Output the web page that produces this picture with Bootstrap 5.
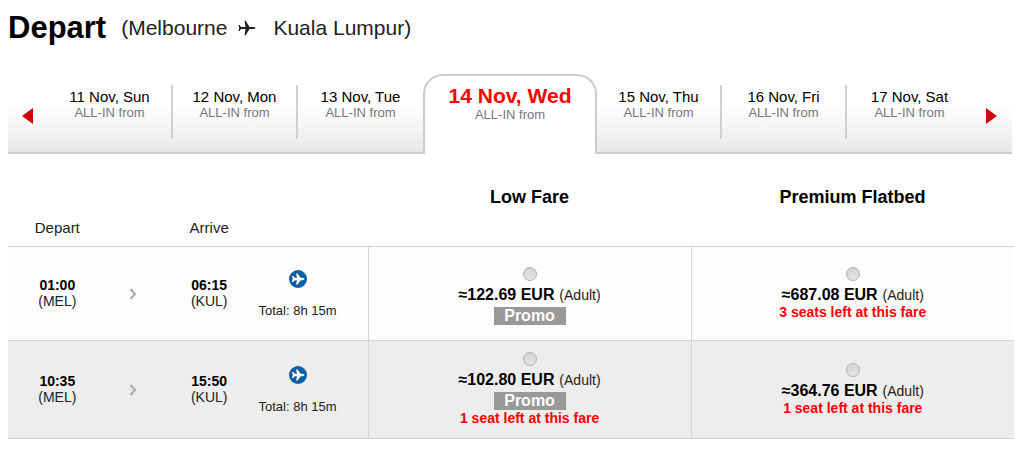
<!DOCTYPE html>
<html lang="en">
<head>
<meta charset="utf-8">
<meta name="viewport" content="width=device-width, initial-scale=1">
<title>Depart: Melbourne to Kuala Lumpur</title>
<link href="https://cdn.jsdelivr.net/npm/bootstrap@5.3.0/dist/css/bootstrap.min.css" rel="stylesheet">
<style>
  body { font-family: "Liberation Sans", Arial, sans-serif; color: #000; background: #fff; font-size: 14px; line-height: 16px; }
  .page { padding: 8px 10px 8px 8px; }
  .trip-head { height: 40px; }
  .trip-head h1 { font-size: 31px; line-height: 40px; font-weight: 700; }
  .route { font-size: 21px; line-height: 40px; color: #222; margin-left: 15px; }
  .route svg { margin: 0 17px 0 11px; }

  .dates { margin: 26px 2px 0 0; height: 80px; background: linear-gradient(#fff 38%, #f5f5f5 66%, #e7e7e7 100%); }
  .day { flex: 125 1 0; padding-top: 11px; border-bottom: 2px solid #ccc; }
  .day a { display: block; height: 54px; padding-top: 4px; text-align: center; font-size: 15px; color: #000; text-decoration: none; }
  .day.ruled a { border-right: 2px solid #d0d0d0; }
  .day small, .day-on small { display: block; font-size: 13px; color: #777; }
  .day-on { flex: 170 1 0; background: #fff; border: 2px solid #ccc; border-bottom: 0; border-radius: 20px 20px 0 0; }
  .day-on a { display: block; padding-top: 8px; text-align: center; color: #f00; font-size: 21px; font-weight: 700; line-height: 24px; text-decoration: none; }
  .day-on small { font-weight: 400; line-height: 13px; }
  .step { flex: 0 0 40px; border: 0; border-bottom: 2px solid #ccc; background: none; padding: 4px 2px 0 0; }

  .fares { width: 100%; table-layout: fixed; border-collapse: collapse; text-align: center; }
  .fares .c-time { width: 9.8%; }
  .fares .c-next { width: 5.3%; }
  .fares .c-total { width: 10.9%; }
  .fares .c-fare { width: 32.1%; }
  .fares thead th { height: 92px; padding: 0 0 10px; font-size: 15px; font-weight: 400; vertical-align: bottom; color: #222; }
  .fares thead .cabin { padding: 31px 0 0; font-size: 18px; font-weight: 700; line-height: 24px; vertical-align: top; color: #000; }
  .fares tbody td { height: 94px; padding: 0; border-top: 1px solid #d5d5d5; background: #fcfcfc; vertical-align: middle; color: #222; }
  .fares tbody tr + tr td { height: 98px; background: #ededed; border-bottom: 1px solid #d5d5d5; }
  .fares tbody td.fare { border-left: 1px solid #d5d5d5; }
  .fares tbody td.promo-only { padding-top: 5px; }
  .fares b { color: #000; }
  .fares tbody td.total { padding: 2px 31px 0 0; font-size: 13px; white-space: nowrap; }
  .total svg { display: block; margin: 0 auto 15px; }
  .fare input { appearance: none; display: block; width: 14px; height: 14px; margin: 0 auto 5px; border: 1px solid #b0b0b0; border-radius: 50%; background: linear-gradient(#d3d3d3, #e4e4e4); }
  .fare label { display: block; line-height: 18px; }
  .fare label b { font-size: 16px; margin-right: 1px; }
  .promo { display: block; width: 72px; height: 18px; margin: 3px auto 0; background: #999; color: #fff; font-size: 16px; font-weight: 700; line-height: 18px; }
  .seats { color: #f00; font-weight: 700; }
</style>
</head>
<body>
<main class="page">
  <header class="trip-head d-flex align-items-center">
    <h1 class="m-0">Depart</h1>
    <div class="route d-flex align-items-center">
      <span>(Melbourne</span>
      <svg width="18" height="18" viewBox="0 0 18 18" fill="#222" aria-hidden="true"><path d="M0.500 6h1L3 8H7.500L6.500 1.500h1L11.500 8H15Q17.500 8.200 17.500 9T15 10H11.500L7.500 16.500H6.500L7.500 10H3L1.500 12H0.500L1.200 9Z"/></svg>
      <span>Kuala Lumpur)</span>
    </div>
  </header>

  <nav class="dates d-flex" aria-label="Departure date">
    <button class="step" type="button" aria-label="Earlier dates"><svg width="11" height="16" viewBox="0 0 11 16"><path d="M11 0v16L0 8z" fill="#d5000f"/></svg></button>
    <div class="day ruled"><a href="#">11 Nov, Sun<small>ALL-IN from</small></a></div>
    <div class="day ruled"><a href="#">12 Nov, Mon<small>ALL-IN from</small></a></div>
    <div class="day"><a href="#">13 Nov, Tue<small>ALL-IN from</small></a></div>
    <div class="day-on"><a href="#" aria-current="date">14 Nov, Wed<small>ALL-IN from</small></a></div>
    <div class="day ruled"><a href="#">15 Nov, Thu<small>ALL-IN from</small></a></div>
    <div class="day ruled"><a href="#">16 Nov, Fri<small>ALL-IN from</small></a></div>
    <div class="day"><a href="#">17 Nov, Sat<small>ALL-IN from</small></a></div>
    <button class="step" type="button" aria-label="Later dates"><svg width="11" height="16" viewBox="0 0 11 16"><path d="M0 0v16l11-8z" fill="#d5000f"/></svg></button>
  </nav>

  <svg class="d-none" aria-hidden="true">
    <symbol id="plane" viewBox="0 0 18 18"><circle cx="9" cy="9" r="9" fill="#0c5ea8"/><path d="M3 6h1.300L5.800 7.700H8L7 3.600H8.500L11.700 7.700H13.500Q15.500 8 15.500 9T13.500 10.300H11.700L8.500 14.400H7L8 10.300H5.800L4.300 12H3L3.800 9Z" fill="#fff"/></symbol>
    <symbol id="next" viewBox="0 0 8 12"><path d="M1.500 1L6 6 1.500 11" fill="none" stroke="#aaa" stroke-width="2"/></symbol>
  </svg>

  <table class="fares">
    <colgroup><col class="c-time"><col class="c-next"><col class="c-time"><col class="c-total"><col class="c-fare"><col class="c-fare"></colgroup>
    <thead>
      <tr><th scope="col">Depart</th><th></th><th scope="col">Arrive</th><th></th><th scope="col" class="cabin">Low Fare</th><th scope="col" class="cabin">Premium Flatbed</th></tr>
    </thead>
    <tbody>
      <tr>
        <td><b>01:00</b><br>(MEL)</td>
        <td><svg width="8" height="12"><use href="#next"/></svg></td>
        <td><b>06:15</b><br>(KUL)</td>
        <td class="total"><svg width="18" height="18"><use href="#plane"/></svg>Total: 8h 15m</td>
        <td class="fare promo-only"><input type="radio" name="fare" id="f1"><label for="f1"><b>≈122.69 EUR</b> (Adult)</label><span class="promo">Promo</span></td>
        <td class="fare"><input type="radio" name="fare" id="f2"><label for="f2"><b>≈687.08 EUR</b> (Adult)</label><div class="seats">3 seats left at this fare</div></td>
      </tr>
      <tr>
        <td><b>10:35</b><br>(MEL)</td>
        <td><svg width="8" height="12"><use href="#next"/></svg></td>
        <td><b>15:50</b><br>(KUL)</td>
        <td class="total"><svg width="18" height="18"><use href="#plane"/></svg>Total: 8h 15m</td>
        <td class="fare"><input type="radio" name="fare" id="f3"><label for="f3"><b>≈102.80 EUR</b> (Adult)</label><span class="promo">Promo</span><div class="seats">1 seat left at this fare</div></td>
        <td class="fare"><input type="radio" name="fare" id="f4"><label for="f4"><b>≈364.76 EUR</b> (Adult)</label><div class="seats">1 seat left at this fare</div></td>
      </tr>
    </tbody>
  </table>
</main>
<script src="https://cdn.jsdelivr.net/npm/bootstrap@5.3.0/dist/js/bootstrap.bundle.min.js"></script>
</body>
</html>
